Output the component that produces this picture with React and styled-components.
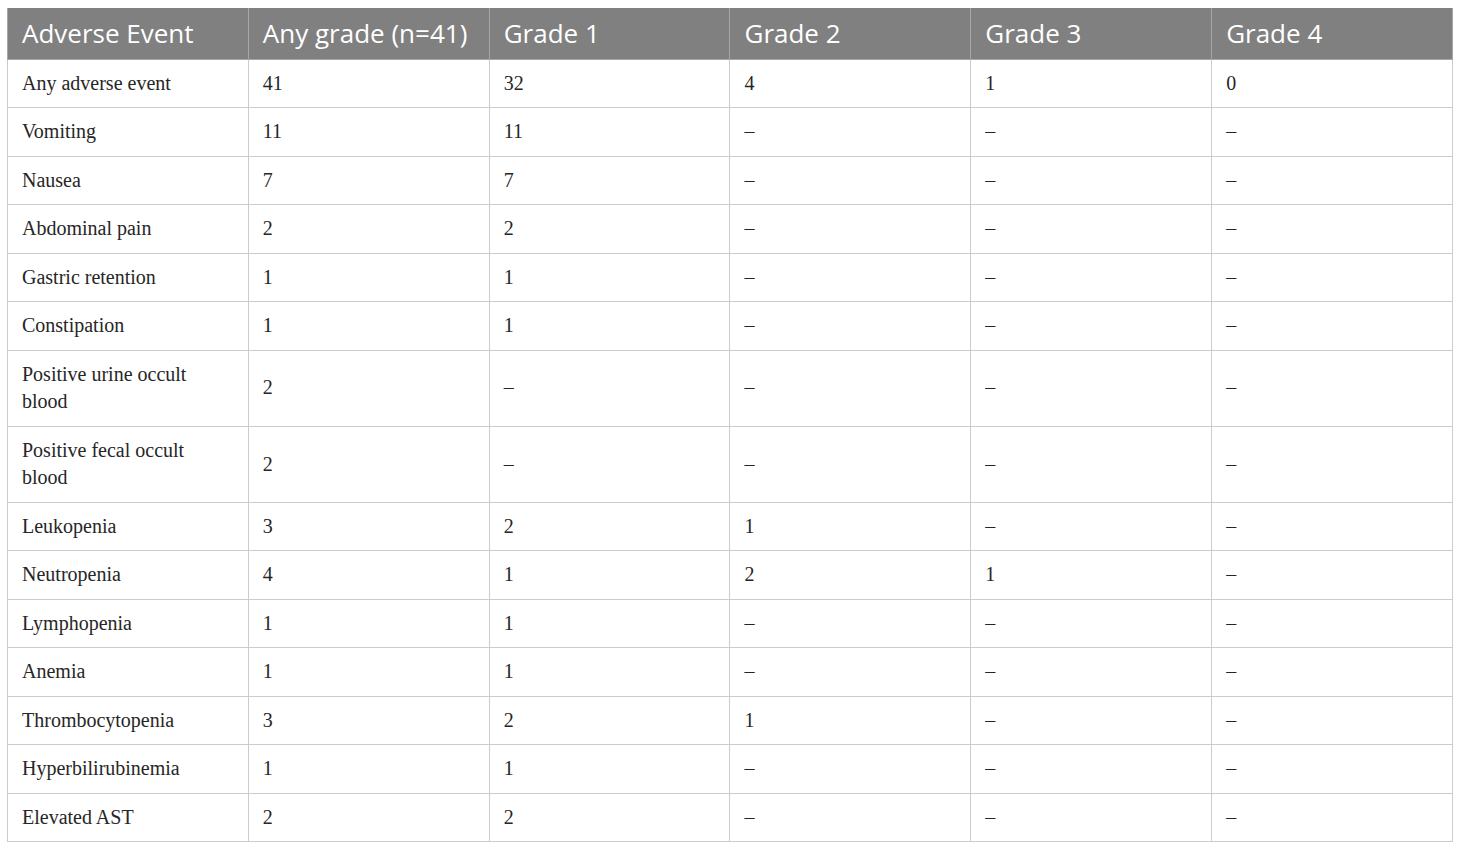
import React from 'react';
import styled, { createGlobalStyle } from 'styled-components';

const GlobalStyle = createGlobalStyle`
  html, body {
    margin: 0;
    padding: 0;
    background: #ffffff;
  }
`;

const Page = styled.div`
  padding: 8px 7px;
`;

const Table = styled.table`
  width: 1446px;
  border-collapse: collapse;
  table-layout: fixed;
`;

const HeadCell = styled.th`
  background: #808080;
  color: #ffffff;
  font-family: "Open Sans", "Noto Sans", sans-serif;
  font-weight: 400;
  font-size: 26px;
  line-height: 31px;
  text-align: left;
  white-space: nowrap;
  padding: 10px 8px 10px 14px;
  border: 1px solid #a6a6a6;
  border-top: none;
`;

const Cell = styled.td`
  font-family: "Liberation Serif", "Times New Roman", serif;
  font-size: 20px;
  line-height: 27.67px;
  color: #262626;
  padding: 9.9px 24px 9.9px 14px;
  border: 1px solid #cccccc;
  vertical-align: middle;
`;

const columns = ['Adverse Event', 'Any grade (n=41)', 'Grade 1', 'Grade 2', 'Grade 3', 'Grade 4'];

const D = '–';

const rows = [
  ['Any adverse event', '41', '32', '4', '1', '0'],
  ['Vomiting', '11', '11', D, D, D],
  ['Nausea', '7', '7', D, D, D],
  ['Abdominal pain', '2', '2', D, D, D],
  ['Gastric retention', '1', '1', D, D, D],
  ['Constipation', '1', '1', D, D, D],
  ['Positive urine occult blood', '2', D, D, D, D],
  ['Positive fecal occult blood', '2', D, D, D, D],
  ['Leukopenia', '3', '2', '1', D, D],
  ['Neutropenia', '4', '1', '2', '1', D],
  ['Lymphopenia', '1', '1', D, D, D],
  ['Anemia', '1', '1', D, D, D],
  ['Thrombocytopenia', '3', '2', '1', D, D],
  ['Hyperbilirubinemia', '1', '1', D, D, D],
  ['Elevated AST', '2', '2', D, D, D],
];

const App = () => (
  <Page>
    <GlobalStyle />
    <Table>
      <thead>
        <tr>
          {columns.map((c) => (
            <HeadCell key={c}>{c}</HeadCell>
          ))}
        </tr>
      </thead>
      <tbody>
        {rows.map((r) => (
          <tr key={r[0]}>
            {r.map((v, i) => (
              <Cell key={i}>{v}</Cell>
            ))}
          </tr>
        ))}
      </tbody>
    </Table>
  </Page>
);

export default App;
